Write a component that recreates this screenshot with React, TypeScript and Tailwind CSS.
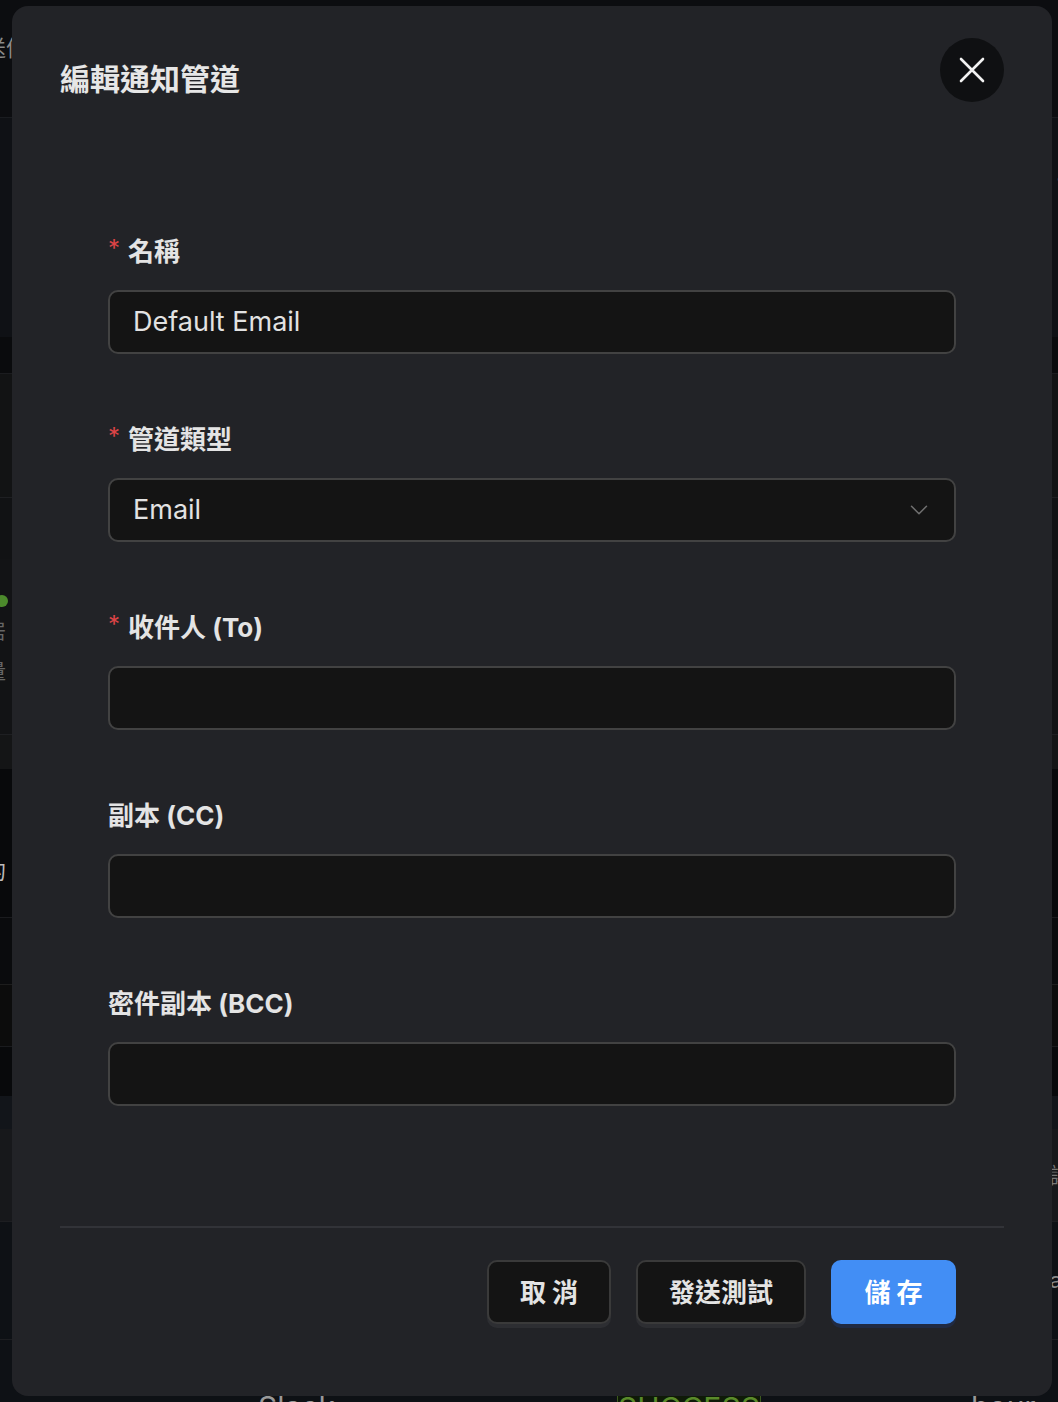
import { ChevronDown } from 'lucide-react';

type Field = {
  label: string;
  required?: boolean;
  value?: string;
  select?: boolean;
};

const fields: Field[] = [
  { label: '名稱', required: true, value: 'Default Email' },
  { label: '管道類型', required: true, value: 'Email', select: true },
  { label: '收件人 (To)', required: true },
  { label: '副本 (CC)' },
  { label: '密件副本 (BCC)' },
];

const font = 'font-[Inter,"Noto_Sans_CJK_TC","Noto_Sans",sans-serif]';

function Backdrop() {
  // the page behind the dialog, only slivers of it show
  return (
    <div className="flex h-full w-full flex-col text-[22px] text-[#8a8a8a]">
      <div className="flex h-[117px] items-start bg-[#0c0d10] pt-[32px]">
        <span className="-ml-[16px]">送信</span>
      </div>
      <div className="flex h-[220px] justify-end border-t border-[#1a1c20] bg-[#0f1115] pt-[50px]">
        <span className="-mr-[8px]">1</span>
      </div>
      <div className="h-[36px] bg-[#0a0b0d]" />
      <div className="h-[124px] border-t border-[#1b1c1f] bg-[#121314]" />
      <div className="h-[62px] border-t border-[#1e1f22] bg-[#111214]" />
      <div className="flex h-[175px] flex-col gap-[10px] bg-[#121315] pt-[36px]">
        <span className="-ml-[4px] h-[12px] w-[12px] rounded-full bg-[#4c8a2c]" />
        <span className="-ml-[14px] text-[20px] text-[#666]">居</span>
        <span className="-ml-[14px] text-[20px] text-[#666]">量</span>
      </div>
      <div className="h-[35px] border-t border-[#1e1f22] bg-[#141516]" />
      <div className="flex h-[148px] items-center bg-[#08090b]">
        <span className="-ml-[16px] mt-[56px] text-[#bbb]">的</span>
      </div>
      <div className="h-[67px] border-t border-[#1a1b1e] bg-[#0a0b0d]" />
      <div className="h-[62px] border-t border-[#1d1d1d] bg-[#0c0c0c]" />
      <div className="h-[50px] border-t border-[#1a1b1e] bg-[#08090b]" />
      <div className="h-[33px] bg-[#12151a]" />
      <div className="flex h-[92px] items-center justify-end bg-[#17181b]">
        <span className="-mr-[14px] text-[#777]">議</span>
      </div>
      <div className="flex h-[118px] items-center justify-end border-t border-[#1d1e21] bg-[#0e1115]">
        <span className="-mr-[4px] text-[#888]">a</span>
      </div>
      <div className="flex flex-1 items-end border-t border-[#1d1e21] bg-[#0e1115] text-[30px] leading-none">
        <span className="ml-[258px] mb-[-20px] text-[#999]">Slack</span>
        <span className="ml-[282px] mb-[-22px] w-[148px] border border-[#3d5a1e] bg-[#0f1a08] text-center text-[#5a8a2a]">SUCCESS</span>
        <span className="ml-[210px] mb-[-20px] text-[#999]">2 hour</span>
      </div>
    </div>
  );
}

function Label({ label, required }: { label: string; required?: boolean }) {
  return (
    <div className="mb-[22px] flex h-[32px] items-center text-[26px] font-bold leading-[32px] text-[#e4e4e4]">
      {required && <span className="mr-[8px] mt-[-6px] text-[24px] font-normal text-[#dc4446]">*</span>}
      <span>{label}</span>
    </div>
  );
}

function Input({ value, select }: { value?: string; select?: boolean }) {
  return (
    <div className="flex h-[64px] items-center justify-between rounded-[10px] border-2 border-[#424242] bg-[#141414] pl-[23px] pr-[20px] text-[27px] text-[#e2e2e2]">
      <span>{value}</span>
      {select && <ChevronDown size={30} strokeWidth={1.2} className="text-[#707070]" />}
    </div>
  );
}

export default function App() {
  return (
    <div className={`relative h-[1402px] w-[1058px] overflow-hidden bg-[#0b0c0e] ${font}`}>
      <Backdrop />

      <div className="absolute left-[12px] top-[6px] flex h-[1390px] w-[1040px] flex-col rounded-[16px] bg-[#222327]">
        <div className="flex items-start justify-between px-12 pt-8">
          <h2 className="mt-[23px] text-[30px] font-bold leading-[36px] text-[#e6e6e6]">編輯通知管道</h2>
          <button className="flex h-[64px] w-[64px] items-center justify-center rounded-full bg-[#0f1012]">
            <svg width="28" height="28" viewBox="0 0 28 28" fill="none">
              <path d="M3 3 L25 25 M25 3 L3 25" stroke="#f2f2f2" strokeWidth="2.6" strokeLinecap="round" />
            </svg>
          </button>
        </div>

        <div className="flex flex-col px-24 pt-[134px]">
          {fields.map((f, i) => (
            <div key={i} className={i < fields.length - 1 ? 'mb-[70px]' : ''}>
              <Label label={f.label} required={f.required} />
              <Input value={f.value} select={f.select} />
            </div>
          ))}
        </div>

        <div className="mx-12 mt-[120px] h-[2px] bg-[#323338]" />

        <div className="flex justify-end gap-[25px] px-24 pt-[32px] text-[26px] font-bold">
          <button className="h-[64px] w-[124px] rounded-[10px] border-2 border-[#3a3a3a] bg-[#141414] text-[#e4e4e4] shadow-[0_4px_0_rgba(255,255,255,0.05)]">
            取 消
          </button>
          <button className="h-[64px] w-[170px] rounded-[10px] border-2 border-[#3a3a3a] bg-[#141414] text-[#e4e4e4] shadow-[0_4px_0_rgba(255,255,255,0.05)]">
            發送測試
          </button>
          <button className="h-[64px] w-[125px] rounded-[10px] bg-[#428ef5] text-white shadow-[0_4px_0_rgba(30,90,220,0.15)]">
            儲 存
          </button>
        </div>
      </div>
    </div>
  );
}
